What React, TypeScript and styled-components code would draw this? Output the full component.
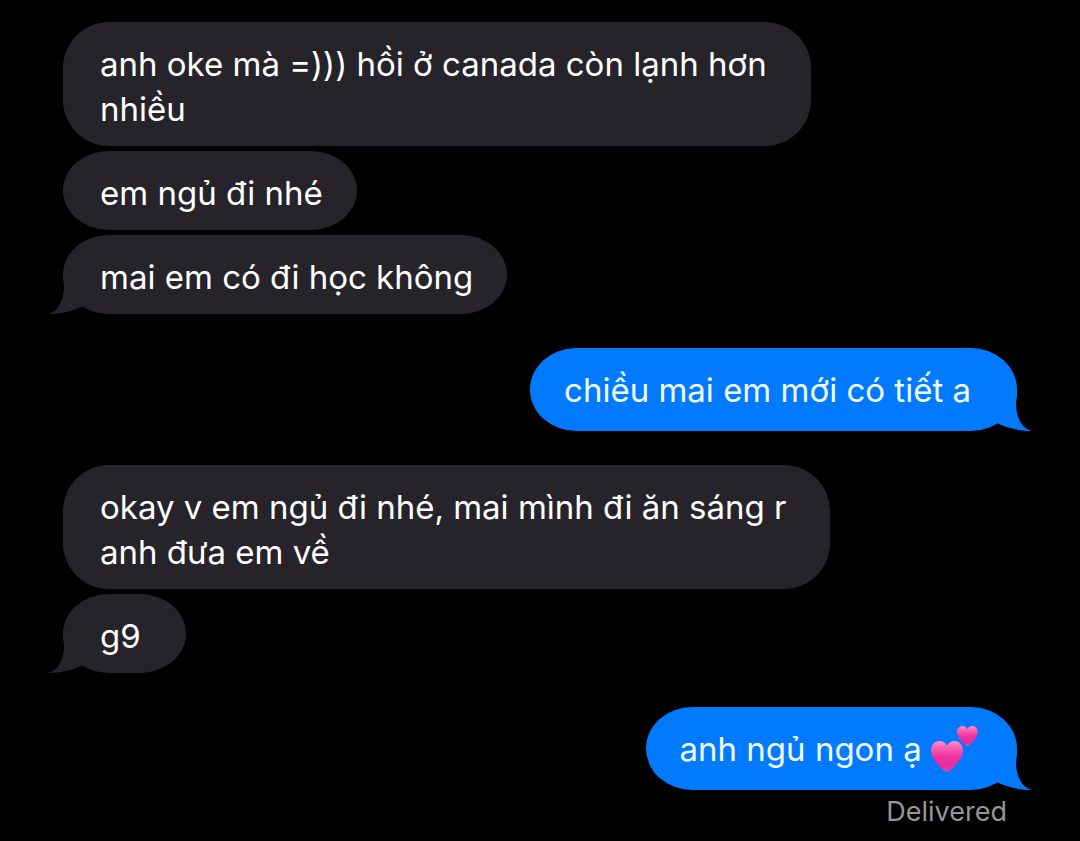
import React from "react";
import styled, { createGlobalStyle, css } from "styled-components";

const GREY = "#26242a";
const BLUE = "#027aff";

const GlobalStyle = createGlobalStyle`
  *, *::before, *::after { box-sizing: border-box; }
  html { background: #000; }
  body { margin: 0; background: #000; }
`;

const Thread = styled.main`
  display: flex;
  flex-direction: column;
  gap: 34px;
  padding: 22px 63px 10px;
  font-family: Inter, "Liberation Sans", sans-serif;
`;

const Group = styled.section<{ $mine?: boolean }>`
  display: flex;
  flex-direction: column;
  align-items: ${(p) => (p.$mine ? "flex-end" : "flex-start")};
  gap: 5px;
`;

const incoming = css`
  padding: 20px 34px 14px 37px;
  background: ${GREY};
  color: #fff;
`;

const outgoing = css`
  padding: 20px 46px 18px 34px;
  background: ${BLUE};
  color: #f0fcff;
`;

const Bubble = styled.p<{ $mine?: boolean; $multiline?: boolean }>`
  position: relative;
  margin: 0;
  min-width: 123px;
  ${(p) => (p.$mine ? outgoing : incoming)}
  ${(p) => p.$multiline && "padding-right: 44px;"}
  border-radius: ${(p) => (p.$multiline ? "46px" : "46px / 50%")};
  font-size: 33px;
  line-height: 45px;
  white-space: pre-line;
`;

const TailSvg = styled.svg<{ $mine?: boolean }>`
  position: absolute;
  bottom: 0;
  width: 35px;
  height: 40px;
  ${(p) => (p.$mine ? "right: -15px; transform: scaleX(-1);" : "left: -15px;")}
`;

const Tail = ({ mine }: { mine?: boolean }) => (
  <TailSvg $mine={mine} viewBox="0 0 35 40" aria-hidden="true">
    <path
      d="M15 0V5L16 12C16 26 10 38 0 40C12 40 26 37 35 32V0Z"
      fill={mine ? BLUE : GREY}
    />
  </TailSvg>
);

const HeartsSvg = styled.svg`
  width: 48px;
  height: 48px;
  vertical-align: -4px;
  margin: -8px -8px -8px 0;
`;

const heart =
  "M16 31C14 31 0 20 0 9C0 4 4 0 8.500 0C12 0 15 2 16 5C17 2 20 0 23.500 0C28 0 32 4 32 9C32 20 18 31 16 31Z";

const Hearts = () => (
  <HeartsSvg viewBox="0 0 48 48" role="img" aria-label="two hearts">
    <defs>
      <linearGradient id="pink" x1="0" y1="0" x2="0" y2="1">
        <stop offset="0" stopColor="#ff8fc8" />
        <stop offset="0.22" stopColor="#f860b4" />
        <stop offset="0.5" stopColor="#f033a4" />
        <stop offset="0.8" stopColor="#e62c9a" />
        <stop offset="1" stopColor="#d24cb0" />
      </linearGradient>
    </defs>
    <path d={heart} fill="url(#pink)" transform="translate(0 16)" />
    <path d={heart} fill="url(#pink)" transform="translate(26 1) scale(0.65)" />
  </HeartsSvg>
);

const Status = styled.small`
  padding-right: 10px;
  font-size: 27px;
  line-height: 34px;
  color: #969698;
`;

export default function App() {
  return (
    <>
      <GlobalStyle />
      <Thread lang="vi">
        <Group>
          <Bubble $multiline>{"anh oke mà =))) hồi ở canada còn lạnh hơn\nnhiều"}</Bubble>
          <Bubble>em ngủ đi nhé</Bubble>
          <Bubble>
            <Tail />
            mai em có đi học không
          </Bubble>
        </Group>
        <Group $mine>
          <Bubble $mine>
            <Tail mine />
            chiều mai em mới có tiết a
          </Bubble>
        </Group>
        <Group>
          <Bubble $multiline>{"okay v em ngủ đi nhé, mai mình đi ăn sáng r\nanh đưa em về"}</Bubble>
          <Bubble>
            <Tail />
            g9
          </Bubble>
        </Group>
        <Group $mine>
          <Bubble $mine>
            <Tail mine />
            anh ngủ ngon ạ <Hearts />
          </Bubble>
          <Status>Delivered</Status>
        </Group>
      </Thread>
    </>
  );
}
